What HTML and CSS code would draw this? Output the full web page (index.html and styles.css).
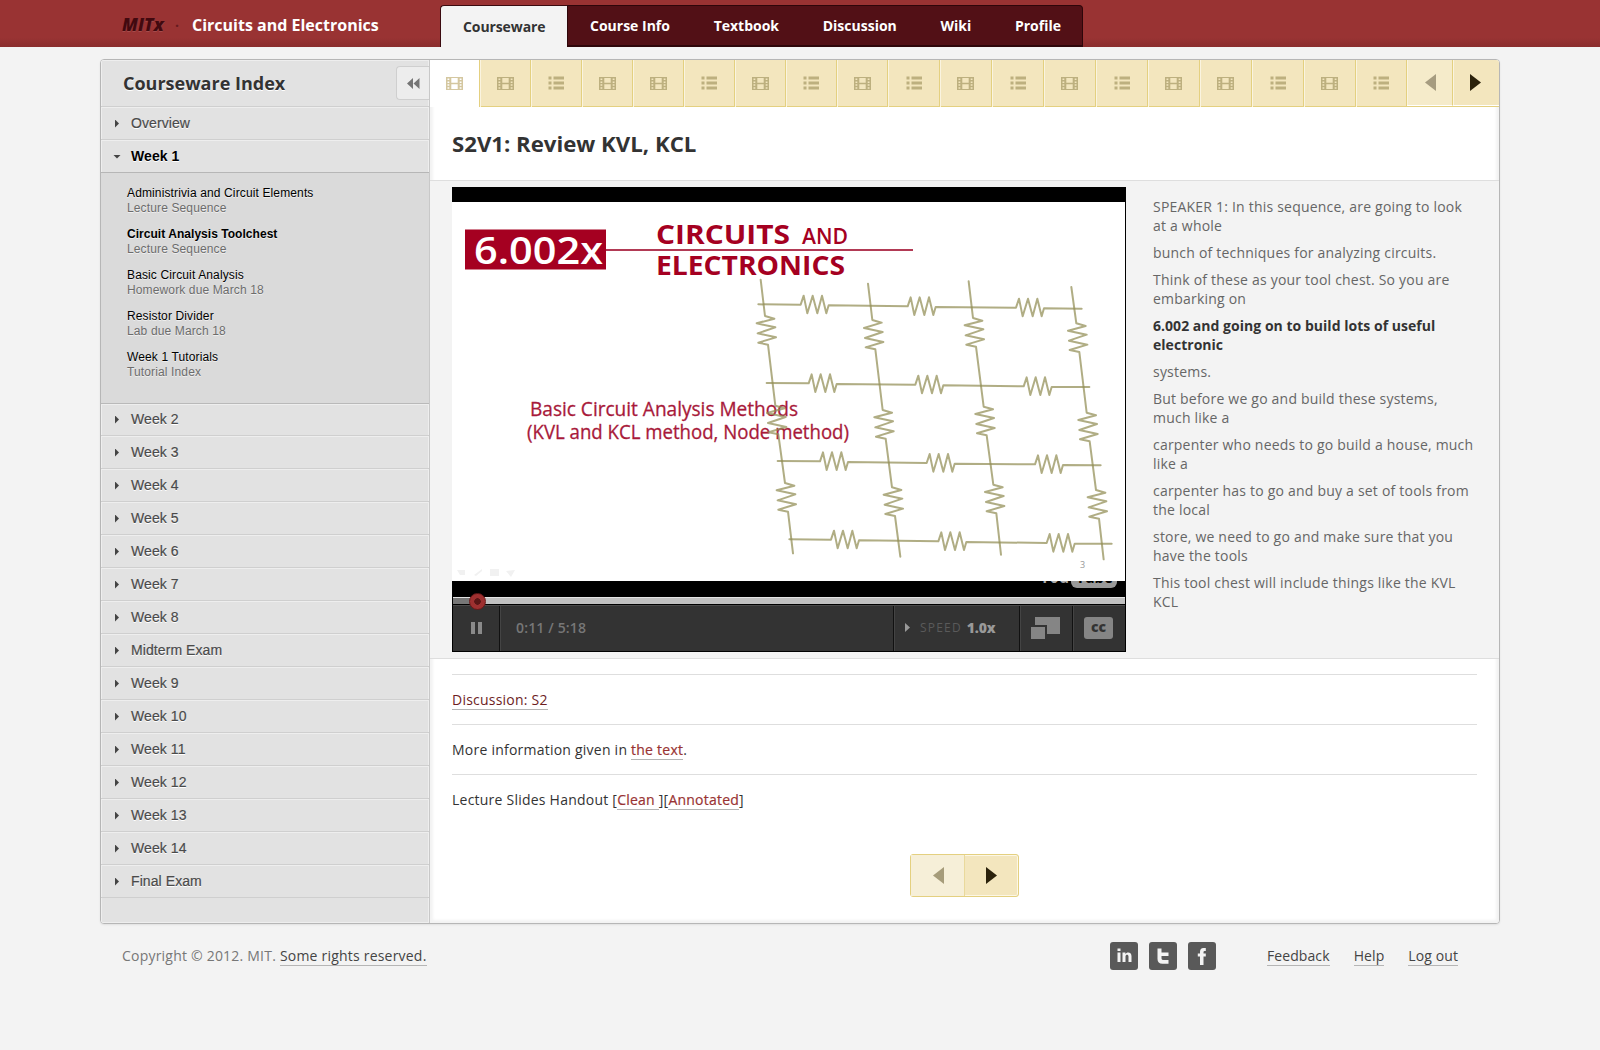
FILE: index.html
```html
<!DOCTYPE html>
<html lang="en">
<head>
<meta charset="utf-8">
<title>Circuits and Electronics</title>
<link rel="stylesheet" href="styles.css">
</head>
<body>
<svg class="defs" width="0" height="0" aria-hidden="true">
  <symbol id="film" viewBox="0 0 17 13"><path fill="currentColor" fill-rule="evenodd" d="M0 0H17V13H0ZM1.500 1.500V3H3.300V1.500ZM1.500 4.500V6H3.300V4.500ZM1.500 7.300V8.800H3.300V7.300ZM1.500 10.200V11.700H3.300V10.200ZM13.700 1.500V3H15.500V1.500ZM13.700 4.500V6H15.500V4.500ZM13.700 7.300V8.800H15.500V7.300ZM13.700 10.200V11.700H15.500V10.200ZM5.300 1V5.800H11.700V1ZM5.300 7.200V12H11.700V7.200Z"/></symbol>
  <symbol id="list" viewBox="0 0 17 14"><path fill="currentColor" d="M.5 .5H3.500V3.500H.5ZM5.500 .5H16V3.500H5.500ZM.5 5.500H3.500V8.500H.5ZM5.500 5.500H16V8.500H5.500ZM.5 10.500H3.500V13.500H.5ZM5.500 10.500H16V13.500H5.500Z"/></symbol>
  <symbol id="prev" viewBox="0 0 11 17"><path fill="currentColor" d="M11 0V17L0 8.500Z"/></symbol>
  <symbol id="next" viewBox="0 0 11 17"><path fill="currentColor" d="M0 0V17L11 8.500Z"/></symbol>
</svg>

<header class="top">
  <div class="brand"><span class="logo">MITx</span><span class="dot">·</span><span class="course">Circuits and Electronics</span></div>
  <nav class="tabs">
    <a class="current">Courseware</a>
    <div class="rest"><a>Course Info</a><a>Textbook</a><a>Discussion</a><a>Wiki</a><a>Profile</a></div>
  </nav>
</header>

<main class="box">
  <aside class="side">
    <div class="side-head"><h2>Courseware Index</h2>
      <a class="collapse"><svg width="13" height="11" viewBox="0 0 13 11"><path fill="#757575" d="M6 0V11L0 5.500ZM12.500 0V11L6.500 5.500Z"/></svg></a></div>
    <a class="row">Overview</a>
    <a class="row open">Week 1</a>
    <ul class="sub">
      <li>Administrivia and Circuit Elements<span>Lecture Sequence</span></li>
      <li class="active">Circuit Analysis Toolchest<span>Lecture Sequence</span></li>
      <li>Basic Circuit Analysis<span>Homework due March 18</span></li>
      <li>Resistor Divider<span>Lab due March 18</span></li>
      <li>Week 1 Tutorials<span>Tutorial Index</span></li>
    </ul>
    <a class="row after">Week 2</a>
    <a class="row">Week 3</a>
    <a class="row">Week 4</a>
    <a class="row">Week 5</a>
    <a class="row">Week 6</a>
    <a class="row">Week 7</a>
    <a class="row">Week 8</a>
    <a class="row">Midterm Exam</a>
    <a class="row">Week 9</a>
    <a class="row">Week 10</a>
    <a class="row">Week 11</a>
    <a class="row">Week 12</a>
    <a class="row">Week 13</a>
    <a class="row">Week 14</a>
    <a class="row">Final Exam</a>
  </aside>

  <section class="content">
    <nav class="seq">
      <a class="on"><svg class="film"><use href="#film"/></svg></a>
      <a><svg class="film"><use href="#film"/></svg></a>
      <a><svg class="list"><use href="#list"/></svg></a>
      <a><svg class="film"><use href="#film"/></svg></a>
      <a><svg class="film"><use href="#film"/></svg></a>
      <a><svg class="list"><use href="#list"/></svg></a>
      <a><svg class="film"><use href="#film"/></svg></a>
      <a><svg class="list"><use href="#list"/></svg></a>
      <a><svg class="film"><use href="#film"/></svg></a>
      <a><svg class="list"><use href="#list"/></svg></a>
      <a><svg class="film"><use href="#film"/></svg></a>
      <a><svg class="list"><use href="#list"/></svg></a>
      <a><svg class="film"><use href="#film"/></svg></a>
      <a><svg class="list"><use href="#list"/></svg></a>
      <a><svg class="film"><use href="#film"/></svg></a>
      <a><svg class="film"><use href="#film"/></svg></a>
      <a><svg class="list"><use href="#list"/></svg></a>
      <a><svg class="film"><use href="#film"/></svg></a>
      <a><svg class="list"><use href="#list"/></svg></a>
      <a class="step off"><svg class="arrow"><use href="#prev"/></svg></a>
      <a class="step"><svg class="arrow"><use href="#next"/></svg></a>
    </nav>
    <h1>S2V1: Review KVL, KCL</h1>

    <div class="video-row">
      <div class="player">
        <svg class="slide" width="673" height="379" viewBox="0 0 673 379">
          <rect x="13" y="27.500" width="141" height="40" fill="#a50021"/>
          <path d="M154 48H461" stroke="#b23a55" stroke-width="2"/>
          <g font-weight="bold">
            <text x="22" y="62" font-size="37" font-weight="600" fill="#fff" textLength="129" lengthAdjust="spacingAndGlyphs">6.002x</text>
            <g fill="#a50021">
              <text x="204" y="42" font-size="26" textLength="134" lengthAdjust="spacingAndGlyphs">CIRCUITS</text>
              <text x="350" y="42" font-size="21" font-weight="600" textLength="46" lengthAdjust="spacingAndGlyphs">AND</text>
              <text x="204" y="73" font-size="26" textLength="189" lengthAdjust="spacingAndGlyphs">ELECTRONICS</text>
            </g>
          </g>
          <g fill="#a8193a" stroke="#a8193a" stroke-width=".3" font-size="19.500">
            <text x="78" y="214" textLength="268" lengthAdjust="spacingAndGlyphs">Basic Circuit Analysis Methods</text>
            <text x="75" y="237" textLength="322" lengthAdjust="spacingAndGlyphs">(KVL and KCL method, Node method)</text>
          </g>
          <g transform="translate(288 58) scale(.33333)" fill="none" stroke="#918d55" stroke-opacity=".72" stroke-width="6" stroke-linejoin="round" stroke-linecap="round">
            <path d="M55 133L182 134l9 -27l11 53l16 -53l14 53l14 -53l13 53l7 -24L503 139l9 -27l11 53l16 -53l14 53l14 -53l13 53l7 -24L828 143l9 -27l11 53l16 -53l14 53l14 -53l13 53l7 -24L1025 146"/>
            <path d="M80 369L206 370l9 -27l11 53l16 -53l14 53l14 -53l13 53l7 -24L526 374l9 -27l11 53l16 -53l14 53l14 -53l13 53l7 -24L851 379l9 -27l11 53l16 -53l14 53l14 -53l13 53l7 -24L1048 381"/>
            <path d="M113 603L240 604l9 -27l11 53l16 -53l14 53l14 -53l13 53l7 -24L560 609l9 -27l11 53l16 -53l14 53l14 -53l13 53l7 -24L885 613l9 -27l11 53l16 -53l14 53l14 -53l13 53l7 -24L1082 616"/>
            <path d="M148 838L273 839l9 -27l11 53l16 -53l14 53l14 -53l13 53l7 -24L595 844l9 -27l11 53l16 -53l14 53l14 -53l13 53l7 -24L920 849l9 -27l11 53l16 -53l14 53l14 -53l13 53l7 -24L1115 851"/>
            <path d="M62 59L75 168l28 8l-53 14l56 12l-53 18l55 12l-53 16l29 6L106 437l28 8l-53 14l56 12l-53 18l55 12l-53 16l29 6L135 669l28 8l-53 14l56 12l-53 18l55 12l-53 16l29 6L159 880"/>
            <path d="M384 71L397 180l28 8l-53 16l56 12l-53 18l55 12l-53 16l29 6L428 450l28 8l-53 14l56 12l-53 18l55 12l-53 16l29 6L456 682l28 8l-53 14l56 12l-53 18l55 12l-53 16l29 6L481 890"/>
            <path d="M686 64L699 174l28 8l-53 14l56 12l-53 18l55 12l-53 16l29 6L731 440l28 8l-53 14l56 12l-53 18l55 12l-53 16l29 6L760 674l28 8l-53 14l56 12l-53 18l55 12l-53 16l29 6L783 884"/>
            <path d="M994 81L1009 190l28 8l-53 14l56 12l-53 18l55 12l-53 16l29 6L1040 458l28 8l-53 14l56 12l-53 18l55 12l-53 16l29 6L1068 690l28 8l-53 14l56 12l-53 18l55 12l-53 16l29 6L1091 898"/>
          </g>
          <text x="628" y="366" font-size="9" fill="#999">3</text>
          <path fill="#f1f1f1" d="M5 368h8v5h-5zM22 373l8-6v2l-6 5zM38 367h9v7h-9zM54 369l9-1-4 7z"/>
        </svg>
        <svg class="mark" width="673" height="16" viewBox="0 0 673 16">
          <rect x="619" y="-20" width="46" height="27" rx="6" fill="#999"/>
          <text x="588" y="1.500" font-size="19" font-weight="bold" fill="#aaa" textLength="29" lengthAdjust="spacingAndGlyphs">You</text>
          <text x="624" y="1.500" font-size="19" font-weight="bold" fill="#000" textLength="37" lengthAdjust="spacingAndGlyphs">Tube</text>
        </svg>
        <div class="slider"><span class="played"></span><span class="handle"></span></div>
        <div class="controls">
          <span class="pause"><svg width="11" height="12"><path fill="#8a8a8a" d="M0 0H4V12H0ZM7 0H11V12H7Z"/></svg></span>
          <span class="time">0:11 / 5:18</span>
          <span class="speed"><svg width="5" height="9"><path fill="#999" d="M0 0L5 4.500L0 9Z"/></svg><small>SPEED</small><b>1.0x</b></span>
          <span class="full"><svg width="29" height="22"><path fill="#858585" d="M4 0H29V17H16V8H4ZM0 10H14V22H0Z"/></svg></span>
          <span class="cc"><b>cc</b></span>
        </div>
      </div>
      <div class="transcript">
        <p>SPEAKER 1: In this sequence, are going to look<br>at a whole</p>
        <p>bunch of techniques for analyzing circuits.</p>
        <p>Think of these as your tool chest. So you are<br>embarking on</p>
        <p class="now">6.002 and going on to build lots of useful<br>electronic</p>
        <p>systems.</p>
        <p>But before we go and build these systems,<br>much like a</p>
        <p>carpenter who needs to go build a house, much<br>like a</p>
        <p>carpenter has to go and buy a set of tools from<br>the local</p>
        <p>store, we need to go and make sure that you<br>have the tools</p>
        <p>This tool chest will include things like the KVL<br>KCL</p>
      </div>
    </div>

    <div class="notes">
      <p><a class="dark">Discussion: S2</a></p>
      <p>More information given in <a>the text</a>.</p>
      <p>Lecture Slides Handout [<a>Clean&nbsp;</a>][<a>Annotated</a>]</p>
    </div>
    <nav class="pager"><a class="off"><svg class="arrow"><use href="#prev"/></svg></a><a><svg class="arrow"><use href="#next"/></svg></a></nav>
  </section>
</main>

<footer class="foot">
  <p>Copyright © 2012. MIT. <a>Some rights reserved.</a></p>
  <div class="social">
    <svg width="28" height="28"><rect width="28" height="28" rx="3" fill="#595959"/><path fill="#f3f3f3" d="M7.500 10.500H10.500V20H7.500ZM7.500 6.500H10.500V9H7.500ZM12.500 10.500H15.400V12C16.500 9.800 21.500 9.500 21.500 14V20H18.500V14.500C18.500 12 15.500 12 15.500 14.500V20H12.500Z"/></svg>
    <svg width="28" height="28"><rect width="28" height="28" rx="3" fill="#595959"/><path fill="#f3f3f3" d="M8.500 6.500H12.500V10.500H19.500V14H12.500V16.500Q12.500 18 14.500 18H19.500V21.800H13.500Q8.500 21.800 8.500 17Z"/></svg>
    <svg width="28" height="28"><rect width="28" height="28" rx="3" fill="#595959"/><path fill="#f3f3f3" d="M12 23V14.500H9.800V11.500H12V9.800Q12 6 15.500 6H17.800V9H16.500Q15.500 9 15.500 10.200V11.500H17.800V14.500H15.500V23Z"/></svg>
  </div>
  <nav><a>Feedback</a><a>Help</a><a>Log out</a></nav>
</footer>
</body>
</html>
```
FILE: styles.css
```css
* { box-sizing: border-box; }
body { margin: 0; background: #f3f3f3; color: #333; font: 14px/19px "Open Sans", sans-serif; }
h1, h2, p, ul { margin: 0; padding: 0; }
svg { display: block; }
.defs { position: absolute; }

.top { height: 47px; padding: 5px 0 0 122px; display: flex; background: linear-gradient(#993333 80%, #8a2d2d); }
.brand { width: 318px; display: flex; align-items: center; padding-bottom: 1px; height: 42px; }
.logo { font-size: 17.500px; font-weight: 800; font-style: italic; color: #42090f; width: 53px; padding-bottom: 2px; text-shadow: 0 1px 0 rgba(255,255,255,.12); }
.dot { color: #651b1f; width: 17px; font-weight: bold; }
.course { color: #fff; font-size: 16px; font-weight: 700; white-space: nowrap; }
.tabs { display: flex; font-weight: 700; height: 42px; }
.tabs .current { width: 127px; padding: 11px 0 0 22px; color: #333; background: #f3f3f3; border: 1px solid #3a0a0f; border-bottom: 0; border-right: 0; border-radius: 4px 0 0 0; letter-spacing: -.1px; }
.rest { width: 516px; padding: 10px 21px 0 22px; display: flex; justify-content: space-between; color: #fff; background: #521016; border: 1px solid #2e060a; border-bottom-width: 2px; border-radius: 0 4px 0 0; }

.box { width: 1400px; height: 865px; margin: 12px auto 0; display: flex; background: #fff; border: 1px solid #b6b6b6; border-radius: 4px; box-shadow: 0 1px 2px rgba(0,0,0,.08); overflow: hidden; }
.side { width: 329px; background: #e2e2e2; border-right: 1px solid #c8c8c8; box-shadow: inset 0 0 0 1px #eee; font-family: "Liberation Sans", Arial, sans-serif; }
.side-head { height: 47px; border-bottom: 1px solid #cfcfcf; display: flex; justify-content: space-between; }
.side h2 { font: bold 18px/46px "Open Sans", sans-serif; padding-left: 22px; color: #333; text-shadow: 0 1px 0 #fff; }
.collapse { width: 33px; height: 34px; margin-top: 6px; display: grid; place-items: center; background: #ededed; border: 1px solid #cfcfcf; border-right: 0; border-radius: 4px 0 0 4px; }
.row { display: flex; align-items: center; height: 33px; padding: 1px 0 0 14px; color: #4a4a4a; letter-spacing: .08px; border-bottom: 1px solid #cfcfcf; box-shadow: inset 0 1px 0 #eee; text-shadow: 0 1px 0 #fff; -webkit-text-stroke: .2px currentColor; }
.row::before { content: ""; width: 4px; height: 8px; margin-right: 12px; background: #444; clip-path: polygon(0 0, 100% 50%, 0 100%); }
.row.open { color: #000; font-weight: bold; border-color: #b6b6b6; -webkit-text-stroke: 0; }
.row.open::before { width: 8px; height: 4px; margin: 0 10px 0 -2px; clip-path: polygon(0 0, 100% 0, 50% 100%); }
.row.after { height: 32px; padding-top: 0; }
.sub { list-style: none; height: 231px; padding: 13px 26px 0; background: #dadada; border-bottom: 1px solid #b9b9b9; color: #000; font-size: 12px; line-height: 15px; letter-spacing: .13px; }
.sub li { margin-bottom: 11px; text-shadow: 0 1px 0 rgba(255,255,255,.6); }
.sub span { display: block; font-weight: normal; color: #6c6c6c; letter-spacing: .13px; }
.sub .active { font-weight: bold; letter-spacing: .04px; }

.content { flex: 1; min-width: 0; box-shadow: inset 0 0 3px 3px #f3f3f3; }
.seq { height: 47px; display: grid; grid-template-columns: 50px repeat(8, 51px) repeat(9, 52px) 51px 46px 46px; border-bottom: 1px solid #e4d080; background: #f3e6be; color: #bdb07f; }
.seq a { display: grid; place-items: center; border-right: 1px solid #e4d080; box-shadow: inset 1px 0 0 #faf4e0; }
.seq .on { height: 47px; background: #fff; color: #d4c7a0; box-shadow: none; }
.film { width: 17px; height: 13px; }
.list { width: 17px; height: 14px; margin: -1px 0 0 1px; }
.arrow { width: 11px; height: 17px; }
.seq .step { color: #2b220b; height: 46px; padding: 0 0 1px; border-bottom: 1px solid #fff; }
.seq .step:last-child { border-right: 0; padding-right: 2px; }
.seq .off { background: #f5ebca; color: #a69c80; }
.seq .off .arrow { margin-left: 1px; }
h1 { height: 74px; border-bottom: 1px solid #dedede; padding-left: 22px; font-size: 22.200px; line-height: 74px; color: #333; }
.video-row { height: 478px; padding: 6px 0 0 22px; display: flex; gap: 27px; background: #f3f3f3; border-bottom: 1px solid #dedede; }
.player { width: 674px; height: 465px; padding-top: 15px; background: #000; border-bottom: 1px solid #000; }
.slide { background: #fff; }
.slider { height: 8px; margin: 0 1px; background: #c1c1c1; border-top: 1px solid #e4e4e4; border-bottom: 1px solid #000; position: relative; }
.played { display: block; width: 24px; height: 6px; background: #777; }
.handle { position: absolute; left: 16px; top: -5px; width: 17px; height: 17px; border-radius: 50%; border: 1px solid #6c1818; background: radial-gradient(circle, #5a1616 0 3px, #9e3030 3.500px); }
.controls { height: 46px; margin: 0 1px; display: flex; align-items: center; background: #333; border-top: 1px solid #4a4a4a; color: #777; font-weight: bold; }
.controls > span { height: 45px; display: flex; align-items: center; padding-bottom: 2px; }
.controls .pause { width: 47px; padding-left: 18px; border-right: 1px solid #111; }
.controls .time { flex: 1; padding-left: 15px; border-left: 1px solid #444; font-weight: 600; letter-spacing: .15px; }
.controls .speed { width: 126px; padding-left: 11px; border-left: 1px solid #111; box-shadow: inset 1px 0 0 #444; }
.speed small { margin: 0 5px 0 10px; font-size: 12px; font-weight: normal; letter-spacing: 1.200px; color: #5a5a5a; }
.speed b { color: #999; letter-spacing: -.2px; }
.full, .cc { width: 53px; padding-left: 11px; border-left: 1px solid #111; box-shadow: inset 1px 0 0 #444; }
.cc b { width: 29px; height: 22px; border-radius: 3px; background: #858585; color: #333; line-height: 19px; text-align: center; }
.transcript { padding-top: 10px; color: #666; white-space: nowrap; letter-spacing: .21px; }
.transcript p { margin-bottom: 8px; }
.transcript .now { color: #333; font-weight: bold; letter-spacing: .03px; }

.notes { margin: 15px 22px 0; letter-spacing: .23px; }
.notes p { height: 50px; padding-top: 15px; border-top: 1px solid #dedede; }
.notes a { color: #993333; -webkit-text-stroke: .2px currentColor; border-bottom: 1px solid #b5b5b5; }
.notes .dark { color: #6d1d1f; -webkit-text-stroke: 0; }
.pager { width: 109px; height: 43px; margin: 30px auto 0; display: flex; border: 1px solid #e4d080; border-radius: 3px; background: #f3e6be; color: #2b220b; box-shadow: inset 0 0 0 1px #fcf7e6; }
.pager a { flex: 1; display: grid; place-items: center; }
.pager .off { background: #f6efd8; color: #a69c7a; border-right: 1px solid #e9d99c; }
.pager .off .arrow { margin-left: 2px; }

.foot { margin: 18px 142px 0 122px; display: flex; height: 28px; align-items: center; color: #777; letter-spacing: .21px; }
.foot p { flex: 1; padding-bottom: 1px; }
.foot a { color: #444; border-bottom: 1px solid #b5b5b5; }
.social { display: flex; gap: 11px; margin-right: 51px; }
.foot nav { display: flex; gap: 24px; padding-bottom: 1px; letter-spacing: .1px; }
```
